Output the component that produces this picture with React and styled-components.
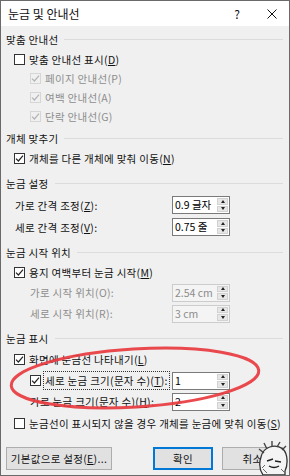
import React from 'react';
import styled, { createGlobalStyle } from 'styled-components';

const GlobalStyle = createGlobalStyle`
  html, body {
    margin: 0;
    padding: 0;
    background: #ffffff;
  }
  body {
    font-family: "Malgun Gothic", "Noto Sans CJK KR", "Noto Sans", sans-serif;
  }
`;

const Window = styled.div`
  position: relative;
  width: 290px;
  height: 476px;
  box-sizing: border-box;
  border: 1px solid #6a6a6a;
  background: #f0f0f0;
  display: flex;
  flex-direction: column;
  overflow: hidden;
  font-size: 10.5px;
  letter-spacing: 0.3px;
  color: #111;
`;

const TitleBar = styled.div`
  height: 25px;
  flex: none;
  background: #fff;
  display: flex;
  align-items: center;
  padding: 0 12px 0 7px;
  font-size: 12px;
  letter-spacing: 0;
  .title {
    flex: 1;
  }
  .help {
    font-size: 12px;
    margin-right: 27px;
  }
`;

const Body = styled.div`
  flex: 1;
  display: flex;
  flex-direction: column;
  padding: 2px 6px 0 5px;
`;

const Section = styled.div`
  display: flex;
  flex-direction: column;
  margin-top: ${(p) => p.$gap || 0}px;
`;

const Header = styled.div`
  height: 22px;
  display: flex;
  align-items: center;
  gap: 6px;
  &::after {
    content: "";
    flex: 1;
    height: 1px;
    background: #dcdcdc;
  }
`;

const Row = styled.div`
  height: ${(p) => p.$h || 19}px;
  display: flex;
  align-items: center;
  padding-left: ${(p) => p.$indent || 0}px;
  color: ${(p) => (p.$disabled ? '#8d8d8d' : '#111')};
  white-space: nowrap;
`;

const Box = styled.span`
  width: 11px;
  height: 11px;
  box-sizing: border-box;
  flex: none;
  border: 1px solid ${(p) => (p.$disabled ? '#d6d6d6' : '#333')};
  background: ${(p) => (p.$disabled ? '#f0f0f0' : '#fff')};
  margin-right: 4px;
  display: flex;
  align-items: center;
  justify-content: center;
  svg {
    display: block;
  }
`;

const Label = styled.span`
  flex: ${(p) => (p.$focus ? 'none' : '1')};
  padding: 1px 1px;
  border: 1px ${(p) => (p.$focus ? 'dotted #333' : 'solid transparent')};
  margin-left: -2px;
`;

const Spin = styled.div`
  width: 58px;
  height: 18px;
  box-sizing: border-box;
  margin-left: auto;
  margin-right: 53px;
  flex: none;
  display: flex;
  letter-spacing: 0;
  border: 1px solid ${(p) => (p.$disabled ? '#cccccc' : '#7a7a7a')};
  background: ${(p) => (p.$disabled ? '#f4f4f4' : '#fff')};
  color: ${(p) => (p.$disabled ? '#8d8d8d' : '#000')};
  .value {
    flex: 1;
    padding-left: 2px;
    line-height: 16px;
  }
`;

const Arrows = styled.div`
  width: 13px;
  display: flex;
  flex-direction: column;
  gap: 1px;
  padding: 1px;
  box-sizing: border-box;
`;

const ArrowBtn = styled.div`
  flex: 1;
  background: #e6e6e6;
  border: 1px solid #d2d2d2;
  display: flex;
  align-items: center;
  justify-content: center;
  &::before {
    content: "";
    border-left: 2.5px solid transparent;
    border-right: 2.5px solid transparent;
    ${(p) => (p.$down ? 'border-top: 3px solid #222;' : 'border-bottom: 3px solid #222;')}
  }
`;

const Footer = styled.div`
  margin-top: auto;
  display: flex;
  padding: 0 6px 5px 5px;
  gap: 9px;
  .spacer {
    flex: 1;
  }
`;

const Button = styled.div`
  height: 23px;
  width: ${(p) => p.$w}px;
  box-sizing: border-box;
  border: 1px solid ${(p) => (p.$primary ? '#0078d7' : '#adadad')};
  box-shadow: ${(p) => (p.$primary ? 'inset 0 0 0 1px #0078d7' : 'none')};
  background: #e1e1e1;
  display: flex;
  align-items: center;
  justify-content: center;
`;

const Overlay = styled.svg`
  position: absolute;
  left: 0;
  top: 0;
  pointer-events: none;
`;

const Mark = styled.svg`
  position: absolute;
  right: 0;
  bottom: 0;
  pointer-events: none;
`;

function Key({ k }) {
  return (
    <>
      (<u>{k}</u>)
    </>
  );
}

function Check({ checked, disabled }) {
  return (
    <Box $disabled={disabled}>
      {checked && (
        <svg width="9" height="9" viewBox="0 0 9 9">
          <polyline
            points="1,4.6 3.4,7 8,1.6"
            fill="none"
            stroke={disabled ? '#b3b3b3' : '#222'}
            strokeWidth="1.2"
          />
        </svg>
      )}
    </Box>
  );
}

function CheckRow({ checked, disabled, indent = 8, h, children }) {
  return (
    <Row $indent={indent} $h={h} $disabled={disabled}>
      <Check checked={checked} disabled={disabled} />
      <Label>{children}</Label>
    </Row>
  );
}

function SpinBox({ value, disabled }) {
  return (
    <Spin $disabled={disabled}>
      <span className="value">{value}</span>
      <Arrows>
        <ArrowBtn />
        <ArrowBtn $down />
      </Arrows>
    </Spin>
  );
}

function InputRow({ indent = 9, h = 22, disabled, value, children }) {
  return (
    <Row $indent={indent} $h={h} $disabled={disabled}>
      <span>{children}</span>
      <SpinBox value={value} disabled={disabled} />
    </Row>
  );
}

export default function App() {
  return (
    <>
      <GlobalStyle />
      <Window>
        <TitleBar>
          <span className="title">눈금 및 안내선</span>
          <span className="help">?</span>
          <svg width="10" height="10" viewBox="0 0 10 10">
            <path d="M0.5 0.5 L9.5 9.5 M9.5 0.5 L0.5 9.5" stroke="#111" strokeWidth="1" />
          </svg>
        </TitleBar>
        <Body>
          <Section>
            <Header>맞춤 안내선</Header>
            <CheckRow>맞춤 안내선 표시<Key k="D" /></CheckRow>
            <CheckRow indent={24} checked disabled>페이지 안내선(P)</CheckRow>
            <CheckRow indent={24} checked disabled>여백 안내선(A)</CheckRow>
            <CheckRow indent={24} checked disabled>단락 안내선(G)</CheckRow>
          </Section>
          <Section $gap={1}>
            <Header>개체 맞추기</Header>
            <CheckRow checked>개체를 다른 개체에 맞춰 이동<Key k="N" /></CheckRow>
          </Section>
          <Section $gap={4}>
            <Header>눈금 설정</Header>
            <InputRow value="0.9 글자">가로 간격 조정<Key k="Z" />:</InputRow>
            <InputRow value="0.75 줄">세로 간격 조정<Key k="V" />:</InputRow>
          </Section>
          <Section $gap={3}>
            <Header>눈금 시작 위치</Header>
            <CheckRow checked>용지 여백부터 눈금 시작<Key k="M" /></CheckRow>
            <InputRow indent={24} h={21} disabled value="2.54 cm">가로 시작 위치(O):</InputRow>
            <InputRow indent={24} h={21} disabled value="3 cm">세로 시작 위치(R):</InputRow>
          </Section>
          <Section $gap={3}>
            <Header>눈금 표시</Header>
            <CheckRow checked h={21}>화면에 눈금선 나타내기<Key k="L" /></CheckRow>
            <Row $indent={24} $h={21}>
              <Check checked />
              <Label $focus>세로 눈금 크기(문자 수)<Key k="T" />:</Label>
              <SpinBox value="1" />
            </Row>
            <InputRow indent={24} h={21} value="2">가로 눈금 크기(문자 수)<Key k="H" />:</InputRow>
            <CheckRow h={22}>눈금선이 표시되지 않을 경우 개체를 눈금에 맞춰 이동<Key k="S" /></CheckRow>
          </Section>
        </Body>
        <Footer>
          <Button $w={106}>기본값으로 설정<Key k="E" />...</Button>
          <span className="spacer" />
          <Button $w={60} $primary>확인</Button>
          <Button $w={61}>취소</Button>
        </Footer>
        <Overlay width="290" height="476" viewBox="0 0 290 476">
          <ellipse
            cx="134"
            cy="377"
            rx="124"
            ry="29"
            transform="rotate(-3.5 134 377)"
            fill="none"
            stroke="#e8393f"
            strokeWidth="3"
            opacity="0.92"
          />
        </Overlay>
        <Mark width="34" height="40" viewBox="0 0 34 40">
          <path d="M6 22 C8 12 20 8 28 14 C33 19 33 30 30 36 L30 40 L8 40 C4 34 4 28 6 22 Z" fill="#f4f4f4" stroke="#333" strokeWidth="1.3" />
          <path d="M9 18 L4 14 M12 14 L9 8 M17 12 L17 6 M22 12 L25 7 M27 15 L31 11" stroke="#444" strokeWidth="1.4" />
          <path d="M12 26 L18 24 M20 26 L26 27 M14 31 Q19 34 24 31" stroke="#222" strokeWidth="1.4" fill="none" />
          <path d="M8 34 L12 38 M26 34 L30 38 M10 30 L7 33" stroke="#666" strokeWidth="1" />
        </Mark>
      </Window>
    </>
  );
}
